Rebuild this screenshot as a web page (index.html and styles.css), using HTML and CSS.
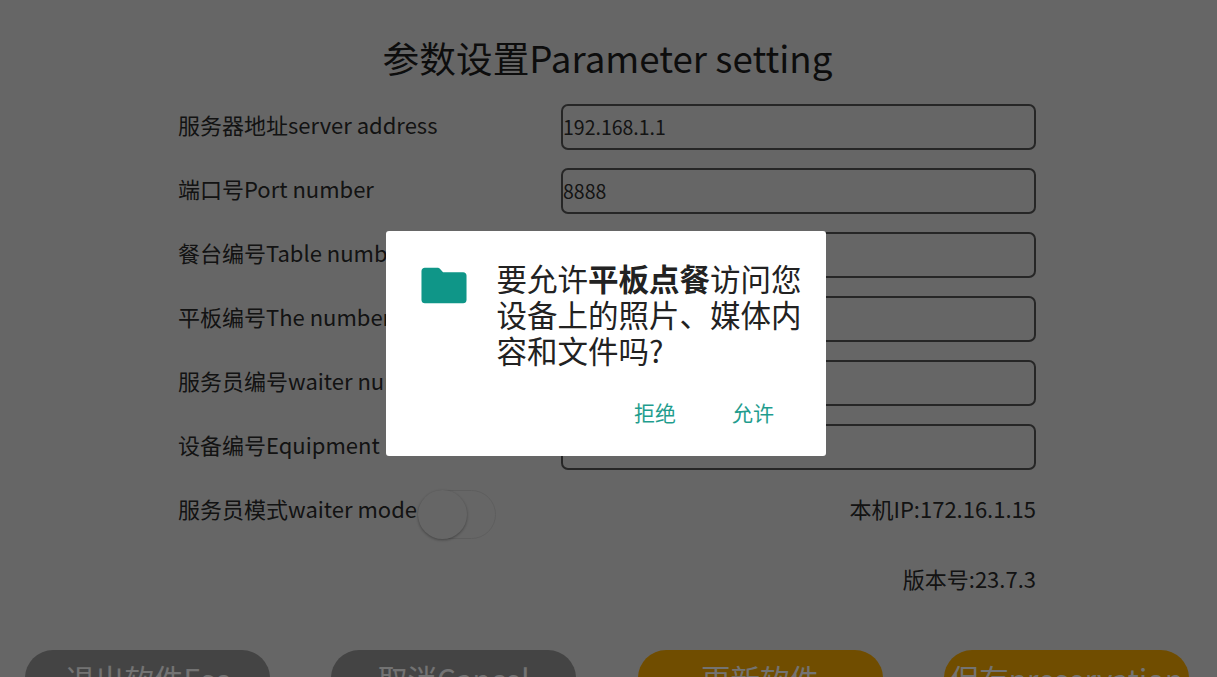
FILE: index.html
```html
<!DOCTYPE html>
<html lang="zh">
<head>
<meta charset="utf-8">
<title>参数设置</title>
<link rel="stylesheet" href="styles.css">
</head>
<body>
<main class="page">
  <h1 class="title">参数设置Parameter setting</h1>
  <section class="form">
    <div class="row"><span class="label">服务器地址server address</span><div class="input">192.168.1.1</div></div>
    <div class="row"><span class="label">端口号Port number</span><div class="input">8888</div></div>
    <div class="row"><span class="label">餐台编号Table number</span><div class="input"></div></div>
    <div class="row"><span class="label">平板编号The number of</span><div class="input"></div></div>
    <div class="row"><span class="label">服务员编号waiter number</span><div class="input"></div></div>
    <div class="row"><span class="label">设备编号Equipment number</span><div class="input"></div></div>
    <div class="mode-row">
      <span class="label-tight">服务员模式waiter mode</span>
      <div class="switch"><div class="knob"></div></div>
      <span class="info">本机IP:172.16.1.15</span>
    </div>
    <div class="version-row"><span class="info">版本号:23.7.3</span></div>
  </section>
  <div class="actions">
    <button class="btn grey">退出软件Esc</button>
    <button class="btn grey">取消Cancel</button>
    <button class="btn amber">更新软件</button>
    <button class="btn amber">保存preservation</button>
  </div>
</main>
<div class="scrim"></div>
<div class="dialog">
  <div class="dialog-body">
    <svg class="folder" width="46" height="37" viewBox="0 0 48 38" aria-hidden="true">
      <path d="M4 .5h13c1.400 0 2.400.6 3.200 1.500L23 5.100h21c2 0 3.500 1.500 3.500 3.500v25.400c0 2-1.500 3.500-3.500 3.500H4C2 37.500.5 36 .5 34V4C.5 2 2 .5 4 .5z" fill="#0f9688"/>
    </svg>
    <p class="message">要允许<b>平板点餐</b>访问您设备上的照片、媒体内容和文件吗?</p>
  </div>
  <div class="dialog-actions">
    <span class="dialog-btn">拒绝</span>
    <span class="dialog-btn">允许</span>
  </div>
</div>
</body>
</html>
```
FILE: styles.css
```css
* { box-sizing: border-box; }
html, body {
  margin: 0;
  width: 1217px;
  height: 677px;
  overflow: hidden;
  background: #e3e3e3;
  font-family: "Noto Sans CJK SC", "Noto Sans", sans-serif;
  color: #2a2a2a;
}
.page {
  height: 677px;
  display: flex;
  flex-direction: column;
  overflow: hidden;
}
.title {
  margin: 31px 0 0;
  padding-right: 2px;
  height: 53px;
  font-size: 36.700px;
  line-height: 53px;
  font-weight: 400;
  text-align: center;
  color: #1e1e1e;
}
.form {
  margin: 20px 181px 0 178px;
  display: flex;
  flex-direction: column;
}
.row {
  display: flex;
  justify-content: space-between;
  height: 46px;
  margin-bottom: 18px;
}
.label, .label-tight, .info {
  font-size: 22px;
  line-height: 40px;
  white-space: nowrap;
}
.input {
  width: 475px;
  height: 46px;
  border: 2px solid #555;
  border-radius: 7px;
  padding: 5px 0 0;
  font-size: 19.500px;
  line-height: 32px;
  color: #2e2e2e;
}
.mode-row {
  display: flex;
  align-items: flex-start;
  height: 70px;
}
.switch {
  position: relative;
  width: 78px;
  height: 49px;
  margin: 2px 0 0 1px;
  border: 1px solid #cfcfcf;
  border-radius: 25px;
}
.knob {
  position: absolute;
  left: -1px;
  top: -1px;
  width: 49px;
  height: 49px;
  border-radius: 50%;
  background: #e3e3e3;
  box-shadow: 0 1px 3px rgba(0, 0, 0, .35);
}
.info { margin-left: auto; }
.version-row { display: flex; }
.actions {
  margin-top: 52px;
  padding-left: 25px;
  display: flex;
  gap: 61.300px;
}
.btn {
  flex: none;
  width: 245px;
  height: 56px;
  border: 0;
  border-radius: 30px;
  font-family: inherit;
  font-size: 29.500px;
  line-height: 44px;
  padding: 0;
  color: #fff;
  white-space: nowrap;
  display: block;
}
.grey { background: #979797; }
.amber { background: #f9ab00; }
.scrim {
  position: absolute;
  inset: 0;
  background: rgba(0, 0, 0, .55);
}
.dialog {
  position: absolute;
  left: 386px;
  top: 231px;
  width: 440px;
  height: 225px;
  background: #fff;
  border-radius: 3px;
  display: flex;
  flex-direction: column;
}
.dialog-body {
  display: flex;
  padding: 29px 20px 0 35px;
  height: 157px;
}
.folder { flex: none; margin-top: 7px; }
.message {
  margin: 0 0 0 29.500px;
  width: 309px;
  flex: none;
  font-size: 30.500px;
  line-height: 36px;
  color: #222;
}
.message b { font-weight: 700; }
.dialog-actions {
  display: flex;
  justify-content: flex-end;
  gap: 56px;
  padding: 9px 52px 0 0;
}
.dialog-btn {
  font-size: 21px;
  line-height: 30px;
  color: #1f9d8e;
}
```
